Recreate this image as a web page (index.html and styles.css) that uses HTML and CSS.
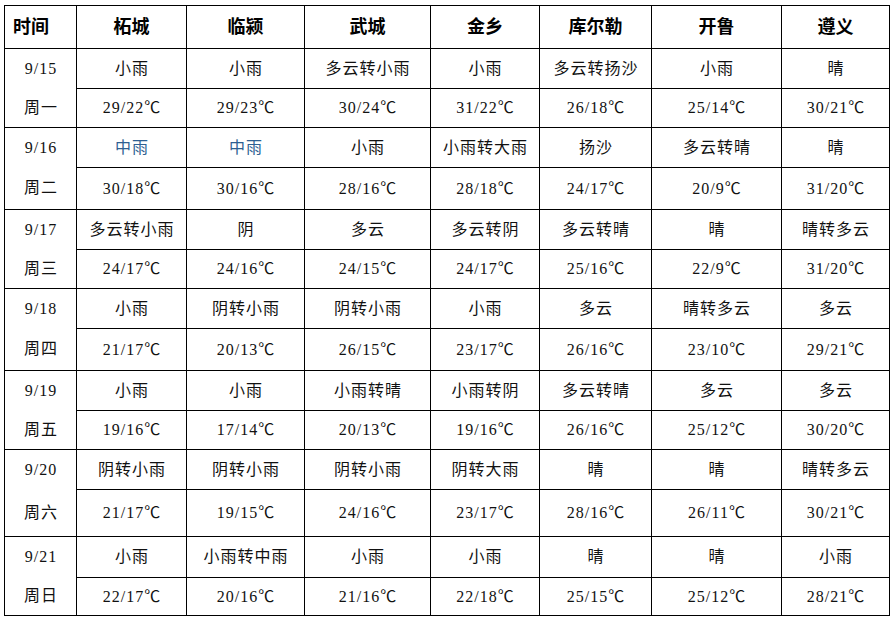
FILE: index.html
```html
<!DOCTYPE html>
<html lang="zh-CN">
<head>
<meta charset="utf-8">
<title>天气预报</title>
<link rel="stylesheet" href="styles.css">
</head>
<body>
<table class="wx">
  <colgroup>
    <col class="c-time"><col class="c1"><col class="c2"><col class="c3"><col class="c4"><col class="c5"><col class="c6"><col class="c7">
  </colgroup>
  <thead>
    <tr class="h-head">
      <th class="time-h">时间</th><th>柘城</th><th>临颍</th><th>武城</th><th>金乡</th><th>库尔勒</th><th>开鲁</th><th>遵义</th>
    </tr>
  </thead>
  <tbody>
    <tr class="h40"><td class="date">9/15</td><td>小雨</td><td>小雨</td><td>多云转小雨</td><td>小雨</td><td>多云转扬沙</td><td>小雨</td><td>晴</td></tr>
    <tr class="h39"><td class="week">周一</td><td>29/22℃</td><td>29/23℃</td><td>30/24℃</td><td>31/22℃</td><td>26/18℃</td><td>25/14℃</td><td>30/21℃</td></tr>

    <tr class="h40"><td class="date">9/16</td><td class="blue">中雨</td><td class="blue">中雨</td><td>小雨</td><td>小雨转大雨</td><td>扬沙</td><td>多云转晴</td><td>晴</td></tr>
    <tr class="h42"><td class="week">周二</td><td>30/18℃</td><td>30/16℃</td><td>28/16℃</td><td>28/18℃</td><td>24/17℃</td><td>20/9℃</td><td>31/20℃</td></tr>

    <tr class="h40"><td class="date">9/17</td><td>多云转小雨</td><td>阴</td><td>多云</td><td>多云转阴</td><td>多云转晴</td><td>晴</td><td>晴转多云</td></tr>
    <tr class="h39"><td class="week">周三</td><td>24/17℃</td><td>24/16℃</td><td>24/15℃</td><td>24/17℃</td><td>25/16℃</td><td>22/9℃</td><td>31/20℃</td></tr>

    <tr class="h40"><td class="date">9/18</td><td>小雨</td><td>阴转小雨</td><td>阴转小雨</td><td>小雨</td><td>多云</td><td>晴转多云</td><td>多云</td></tr>
    <tr class="h42"><td class="week">周四</td><td>21/17℃</td><td>20/13℃</td><td>26/15℃</td><td>23/17℃</td><td>26/16℃</td><td>23/10℃</td><td>29/21℃</td></tr>

    <tr class="h40"><td class="date">9/19</td><td>小雨</td><td>小雨</td><td>小雨转晴</td><td>小雨转阴</td><td>多云转晴</td><td>多云</td><td>多云</td></tr>
    <tr class="h39"><td class="week">周五</td><td>19/16℃</td><td>17/14℃</td><td>20/13℃</td><td>19/16℃</td><td>26/16℃</td><td>25/12℃</td><td>30/20℃</td></tr>

    <tr class="h40"><td class="date">9/20</td><td>阴转小雨</td><td>阴转小雨</td><td>阴转小雨</td><td>阴转大雨</td><td>晴</td><td>晴</td><td>晴转多云</td></tr>
    <tr class="h47"><td class="week">周六</td><td>21/17℃</td><td>19/15℃</td><td>24/16℃</td><td>23/17℃</td><td>28/16℃</td><td>26/11℃</td><td>30/21℃</td></tr>

    <tr class="h41"><td class="date">9/21</td><td>小雨</td><td>小雨转中雨</td><td>小雨</td><td>小雨</td><td>晴</td><td>晴</td><td>小雨</td></tr>
    <tr class="h38"><td class="week">周日</td><td>22/17℃</td><td>20/16℃</td><td>21/16℃</td><td>22/18℃</td><td>25/15℃</td><td>25/12℃</td><td>28/21℃</td></tr>
  </tbody>
</table>
</body>
</html>
```
FILE: styles.css
```css
html, body {
  margin: 0;
  padding: 0;
  background: #ffffff;
}

body {
  font-family: "Liberation Serif", "Noto Sans CJK SC", serif;
  color: #111111;
}

.wx {
  margin: 5px 0 0 4px;
  border-collapse: collapse;
  table-layout: fixed;
  width: 885px;
}

.c-time { width: 72px; }
.c1 { width: 110px; }
.c2 { width: 118px; }
.c3 { width: 126px; }
.c4 { width: 109px; }
.c5 { width: 112px; }
.c6 { width: 130px; }
.c7 { width: 108px; }

.wx th,
.wx td {
  border: 1px solid #000000;
  padding: 0;
  text-align: center;
  vertical-align: middle;
  font-size: 16px;
  font-weight: normal;
  white-space: nowrap;
  line-height: 1;
}

.wx td {
  letter-spacing: 1px;
  text-indent: 1px;
}

.wx th {
  font-weight: bold;
  font-size: 18px;
  color: #000000;
}

.wx th.time-h {
  text-align: left;
  padding-left: 8px;
}

.wx td.date {
  border-bottom: hidden;
}

.wx td.blue {
  color: #2e5f92;
}

.h-head { height: 43px; }
.h38 { height: 38px; }
.h39 { height: 39px; }
.h40 { height: 40px; }
.h41 { height: 41px; }
.h42 { height: 42px; }
.h47 { height: 47px; }
```
